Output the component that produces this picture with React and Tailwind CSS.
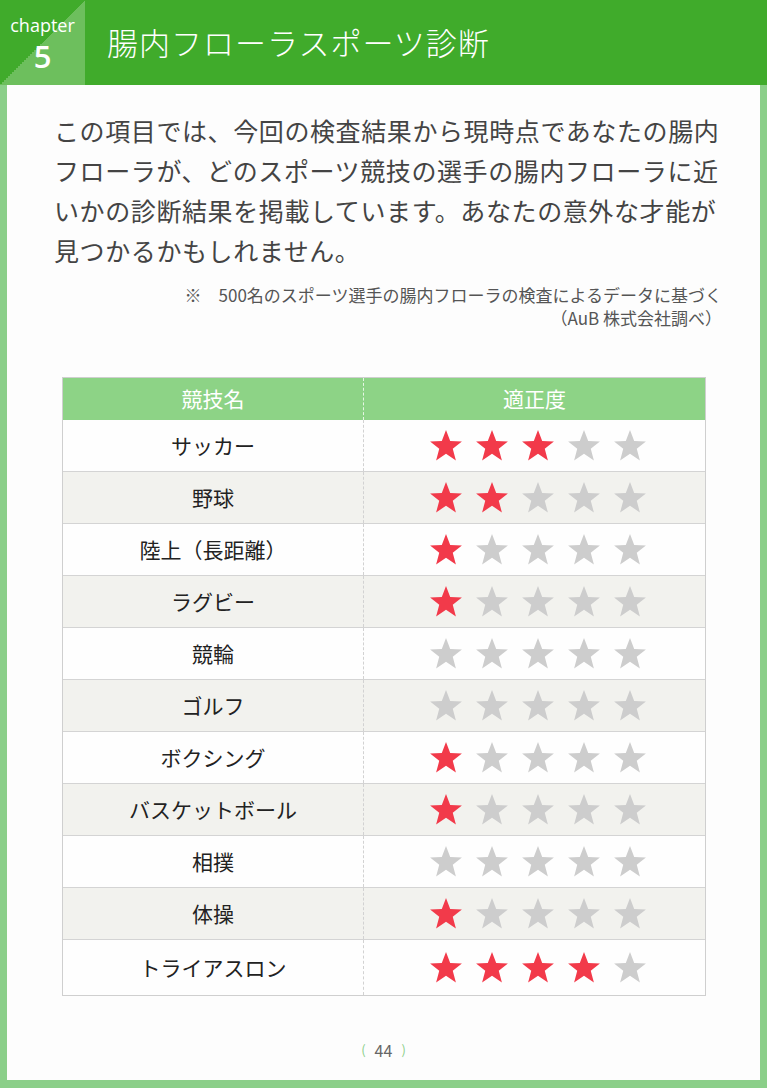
import React from 'react'

const rows = [
  ['サッカー', 3],
  ['野球', 2],
  ['陸上（長距離）', 1],
  ['ラグビー', 1],
  ['競輪', 0],
  ['ゴルフ', 0],
  ['ボクシング', 1],
  ['バスケットボール', 1],
  ['相撲', 0],
  ['体操', 1],
  ['トライアスロン', 4],
]

const font = { fontFamily: '"Noto Sans CJK JP", "Noto Sans", sans-serif' }

function Star({ on }) {
  return (
    <svg width="36" height="36" viewBox="0 0 24 24">
      <polygon
        points="12,1.3 14.8,8.7 22.6,9 16.5,13.9 18.6,21.6 12,17.2 5.4,21.6 7.5,13.9 1.4,9 9.2,8.7"
        fill={on ? '#f23a4a' : '#cdcdcd'}
      />
    </svg>
  )
}

export default function App() {
  return (
    <div className="w-[767px] h-[1088px] flex flex-col bg-[#fdfdfd]" style={font}>
      {/* header */}
      <div className="h-[85px] flex items-center bg-[#40ab2b] shrink-0">
        <div className="w-[85px] h-[85px] flex flex-col items-center bg-[linear-gradient(to_bottom_right,#40ab2b_50%,#6dbf5d_50%)] text-white pt-[14px]">
          <span className="text-[18px] leading-[22px]" style={{ fontFamily: '"Open Sans", sans-serif' }}>chapter</span>
          <span className="text-[31px] leading-[40px] font-semibold" style={{ fontFamily: '"Open Sans", sans-serif' }}>5</span>
        </div>
        <h1 className="ml-[22px] text-white text-[31px] font-light tracking-[1px]">腸内フローラスポーツ診断</h1>
      </div>

      {/* body */}
      <div className="flex-1 flex flex-col border-l-[7px] border-r-[7px] border-b-[8px] border-[#8bcf89]">
        <div className="pl-[47px] pt-[25px] text-[25px] leading-[40px] text-[#444] tracking-[0.6px]">
          <p>この項目では、今回の検査結果から現時点であなたの腸内</p>
          <p>フローラが、どのスポーツ競技の選手の腸内フローラに近</p>
          <p>いかの診断結果を掲載しています。あなたの意外な才能が</p>
          <p>見つかるかもしれません。</p>
        </div>
        <div className="mt-[13px] pr-[38px] text-right text-[17px] leading-[23px] text-[#555]">
          <p>※　500名のスポーツ選手の腸内フローラの検査によるデータに基づく</p>
          <p>（AuB 株式会社調べ）</p>
        </div>

        {/* table */}
        <div className="mt-[48px] ml-[55px] w-[644px] border border-[#cfcfcf]">
          <div className="grid grid-cols-[300px_1fr] h-[42px] bg-[#8dd386] text-white text-[21px]">
            <div className="flex items-center justify-center">競技名</div>
            <div className="flex items-center justify-center border-l border-dashed border-[#e6f5e4]">適正度</div>
          </div>
          {rows.map(([name, n], i) => (
            <div
              key={name}
              className={`grid grid-cols-[300px_1fr] text-[21px] text-[#222] ${i === rows.length - 1 ? 'h-[55px]' : 'h-[52px] border-b border-[#d4d4d4]'} ${i % 2 ? 'bg-[#f2f2ee]' : 'bg-[#fefefe]'}`}
            >
              <div className="flex items-center justify-center">{name}</div>
              <div className="flex items-center justify-center gap-[10px] border-l border-dashed border-[#d2d2d2] pl-[6px]">
                {[0, 1, 2, 3, 4].map((k) => (
                  <Star key={k} on={k < n} />
                ))}
              </div>
            </div>
          ))}
        </div>

        <div className="mt-auto mb-[18px] flex justify-center items-center gap-[9px] text-[16px] text-[#666]">
          <span className="text-[#8bcf89] text-[13px]">(</span>
          <span>44</span>
          <span className="text-[#8bcf89] text-[13px]">)</span>
        </div>
      </div>
    </div>
  )
}
